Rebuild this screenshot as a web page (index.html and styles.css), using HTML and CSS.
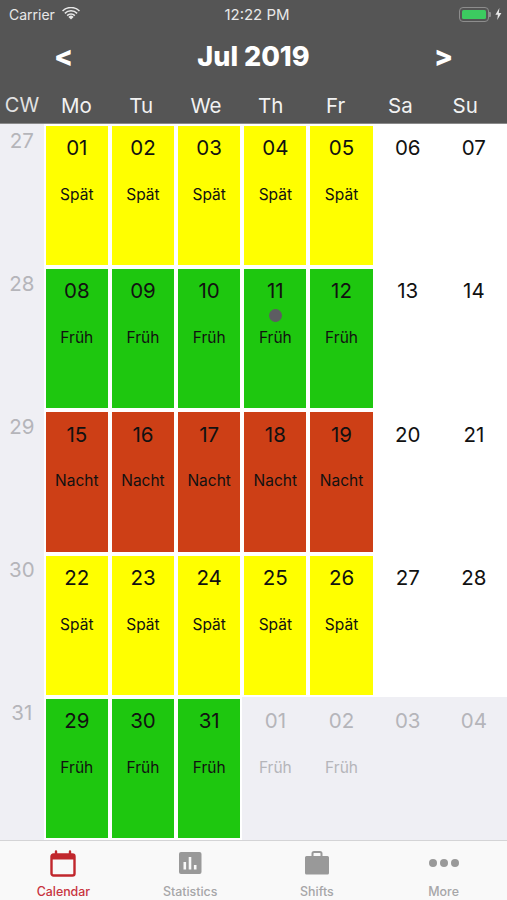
FILE: index.html
```html
<!DOCTYPE html>
<html lang="en">
<head>
<meta charset="utf-8">
<title>Calendar</title>
<link rel="stylesheet" href="styles.css">
</head>
<body>
<div class="app">
  <header class="top">
    <div class="status">
      <div class="status-left">
        <span>Carrier</span>
        <svg class="wifi" viewBox="0 0 18 13" width="18" height="13"><path d="M9 12.6 6.4 9.9a3.7 3.7 0 0 1 5.2 0z" fill="#e8e8e8"/><path d="M4.6 8.1a6.2 6.2 0 0 1 8.8 0l-1.1 1.1a4.7 4.7 0 0 0-6.6 0z" fill="#e8e8e8"/><path d="M2.3 5.8a9.5 9.5 0 0 1 13.4 0l-1.1 1.1a8 8 0 0 0-11.2 0z" fill="#e8e8e8"/><path d="M0 3.5a12.7 12.7 0 0 1 18 0l-1.1 1.1a11.2 11.2 0 0 0-15.8 0z" fill="#e8e8e8"/></svg>
      </div>
      <span class="clock">12:22 PM</span>
      <div class="status-right">
        <span class="battery"><span class="battery-fill"></span></span>
        <span class="battery-tip"></span>
        <svg class="bolt" viewBox="0 0 7 12" width="7" height="12"><path d="M4.4 0 0.4 6.8h2.5L2.2 12l4.2-7H3.8z" fill="#e8e8e8"/></svg>
      </div>
    </div>
    <div class="month">
      <span class="arrow">&lt;</span>
      <span class="month-title">Jul 2019</span>
      <span class="arrow">&gt;</span>
    </div>
    <div class="weekdays">
      <span class="cw-head">CW</span>
      <span>Mo</span><span>Tu</span><span>We</span><span>Th</span><span>Fr</span><span>Sa</span><span>Su</span>
    </div>
  </header>

  <main class="grid">
    <div class="cw">27</div>
    <div class="day late"><b>01</b><i>Spät</i></div>
    <div class="day late"><b>02</b><i>Spät</i></div>
    <div class="day late"><b>03</b><i>Spät</i></div>
    <div class="day late"><b>04</b><i>Spät</i></div>
    <div class="day late"><b>05</b><i>Spät</i></div>
    <div class="day"><b>06</b></div>
    <div class="day"><b>07</b></div>

    <div class="cw">28</div>
    <div class="day early"><b>08</b><i>Früh</i></div>
    <div class="day early"><b>09</b><i>Früh</i></div>
    <div class="day early"><b>10</b><i>Früh</i></div>
    <div class="day early"><b>11</b><span class="dot"></span><i>Früh</i></div>
    <div class="day early"><b>12</b><i>Früh</i></div>
    <div class="day"><b>13</b></div>
    <div class="day"><b>14</b></div>

    <div class="cw">29</div>
    <div class="day night"><b>15</b><i>Nacht</i></div>
    <div class="day night"><b>16</b><i>Nacht</i></div>
    <div class="day night"><b>17</b><i>Nacht</i></div>
    <div class="day night"><b>18</b><i>Nacht</i></div>
    <div class="day night"><b>19</b><i>Nacht</i></div>
    <div class="day"><b>20</b></div>
    <div class="day"><b>21</b></div>

    <div class="cw">30</div>
    <div class="day late"><b>22</b><i>Spät</i></div>
    <div class="day late"><b>23</b><i>Spät</i></div>
    <div class="day late"><b>24</b><i>Spät</i></div>
    <div class="day late"><b>25</b><i>Spät</i></div>
    <div class="day late"><b>26</b><i>Spät</i></div>
    <div class="day"><b>27</b></div>
    <div class="day"><b>28</b></div>

    <div class="cw">31</div>
    <div class="day early"><b>29</b><i>Früh</i></div>
    <div class="day early"><b>30</b><i>Früh</i></div>
    <div class="day early"><b>31</b><i>Früh</i></div>
    <div class="day out"><b>01</b><i>Früh</i></div>
    <div class="day out"><b>02</b><i>Früh</i></div>
    <div class="day out"><b>03</b></div>
    <div class="day out"><b>04</b></div>
  </main>

  <nav class="tabs">
    <div class="tab active">
      <svg viewBox="0 0 26 28" width="26" height="28"><path d="M3.5 5.5h19a2 2 0 0 1 2 2v17a2 2 0 0 1-2 2h-19a2 2 0 0 1-2-2v-17a2 2 0 0 1 2-2z" fill="none" stroke="#c1272d" stroke-width="2.4"/><path d="M1.5 5.5h23v5h-23z" fill="#c1272d"/><path d="M6 2.5v4M20 2.5v4" stroke="#c1272d" stroke-width="2.4" stroke-linecap="round"/></svg>
      <span>Calendar</span>
    </div>
    <div class="tab">
      <svg viewBox="0 0 24 24" width="24" height="24"><rect x="1" y="1" width="22.500" height="22" rx="2" fill="#999"/><rect x="5.500" y="11" width="2.600" height="7.500" fill="#f9f9f9"/><rect x="10.700" y="6" width="2.600" height="12.500" fill="#f9f9f9"/><rect x="15.900" y="14" width="2.600" height="4.500" fill="#f9f9f9"/></svg>
      <span>Statistics</span>
    </div>
    <div class="tab">
      <svg viewBox="0 0 26 26" width="26" height="26"><path d="M2.500 6h21a1.500 1.500 0 0 1 1.500 1.500V23a1.500 1.500 0 0 1-1.500 1.500h-21A1.500 1.500 0 0 1 1 23V7.500A1.500 1.500 0 0 1 2.500 6z" fill="#999"/><path d="M8.500 6.500V3.500a1.500 1.500 0 0 1 1.500-1.500h6a1.500 1.500 0 0 1 1.500 1.500v3" fill="none" stroke="#999" stroke-width="2"/></svg>
      <span>Shifts</span>
    </div>
    <div class="tab">
      <svg viewBox="0 0 30 24" width="30" height="24"><circle cx="4" cy="12" r="4" fill="#999"/><circle cx="15" cy="12" r="4" fill="#999"/><circle cx="26" cy="12" r="4" fill="#999"/></svg>
      <span>More</span>
    </div>
  </nav>
</div>
</body>
</html>
```
FILE: styles.css
```css
* { box-sizing: border-box; }
html, body { margin: 0; padding: 0; }
body {
  font-family: Inter, "Liberation Sans", sans-serif;
  background: #fff;
  color: #111;
}
.app {
  width: 507px;
  height: 900px;
  display: flex;
  flex-direction: column;
  overflow: hidden;
}
.top {
  height: 124px;
  background: #555;
  color: #f2f2f2;
  flex: none;
  border-bottom: 1px solid #8a8a8a;
}
.status {
  height: 28px;
  padding: 0 5px 0 9px;
  display: grid;
  grid-template-columns: 1fr auto 1fr;
  align-items: center;
  font-size: 14px;
  color: #e8e8e8;
}
.status-left { display: flex; align-items: center; gap: 7px; }
.wifi { margin-top: -2px; }
.clock { font-size: 15px; padding-left: 3px; }
.status-right { display: flex; align-items: center; justify-content: flex-end; }
.battery {
  width: 30px;
  height: 15px;
  border: 1px solid #8d8d8d;
  border-radius: 4px;
  padding: 2px;
  display: flex;
}
.battery-fill { flex: 1; background: #3ccb60; border-radius: 1.500px; }
.battery-tip { width: 2px; height: 5px; background: #8d8d8d; margin-right: 4px; border-radius: 0 1px 1px 0; }
.month {
  height: 54px;
  padding-top: 2px;
  display: grid;
  grid-template-columns: 127px 1fr 127px;
  align-items: center;
  text-align: center;
}
.month-title { font-size: 27px; font-weight: 800; color: #fff; }
.arrow { font-size: 28px; font-weight: 800; color: #fff; }
.weekdays {
  height: 41px;
  display: grid;
  grid-template-columns: 44px repeat(7, 64.800px);
  align-items: center;
  text-align: center;
  font-size: 20.500px;
  padding-top: 5px;
}
.cw-head { color: #e2e2e2; font-size: 20px; }
.grid {
  flex: 1;
  display: grid;
  grid-template-columns: 43.700px repeat(7, 1fr);
  grid-template-rows: repeat(5, 1fr);
  border-bottom: 1px solid #d4d4d6;
  min-height: 0;
}
.cw {
  background: #efeff4;
  color: #b5b5ba;
  font-size: 20.500px;
  text-align: center;
  padding-top: 3.500px;
}
.day {
  background: #fff;
  border: 2.400px solid #fff;
  display: flex;
  flex-direction: column;
  align-items: center;
  position: relative;
}
.day b {
  font-weight: 400;
  font-size: 20.500px;
  line-height: 25px;
  margin-top: 9.200px;
}
.day i {
  font-style: normal;
  font-size: 15.500px;
  line-height: 20px;
  margin-top: 24.800px;
}
.late { background: #ffff00; }
.early { background: #1ec70f; }
.night { background: #cd3f16; }
.out { background: #efeff4; border-color: #efeff4; color: #b5b5ba; }
.dot {
  position: absolute;
  left: 50%;
  top: 40px;
  width: 13px;
  height: 13px;
  margin-left: -6.500px;
  border-radius: 50%;
  background: #5d5d62;
}
.tabs {
  height: 59px;
  flex: none;
  background: #f9f9f9;
  display: grid;
  grid-template-columns: repeat(4, 1fr);
}
.tab {
  display: flex;
  flex-direction: column;
  align-items: center;
  color: #a6a6a8;
  font-size: 12.400px;
  font-weight: 500;
  padding-top: 8px;
  position: relative;
}
.tab svg { height: 28px; }
.tab span { margin-top: 7px; line-height: 15px; }
.tab.active { color: #c8343f; }
```
